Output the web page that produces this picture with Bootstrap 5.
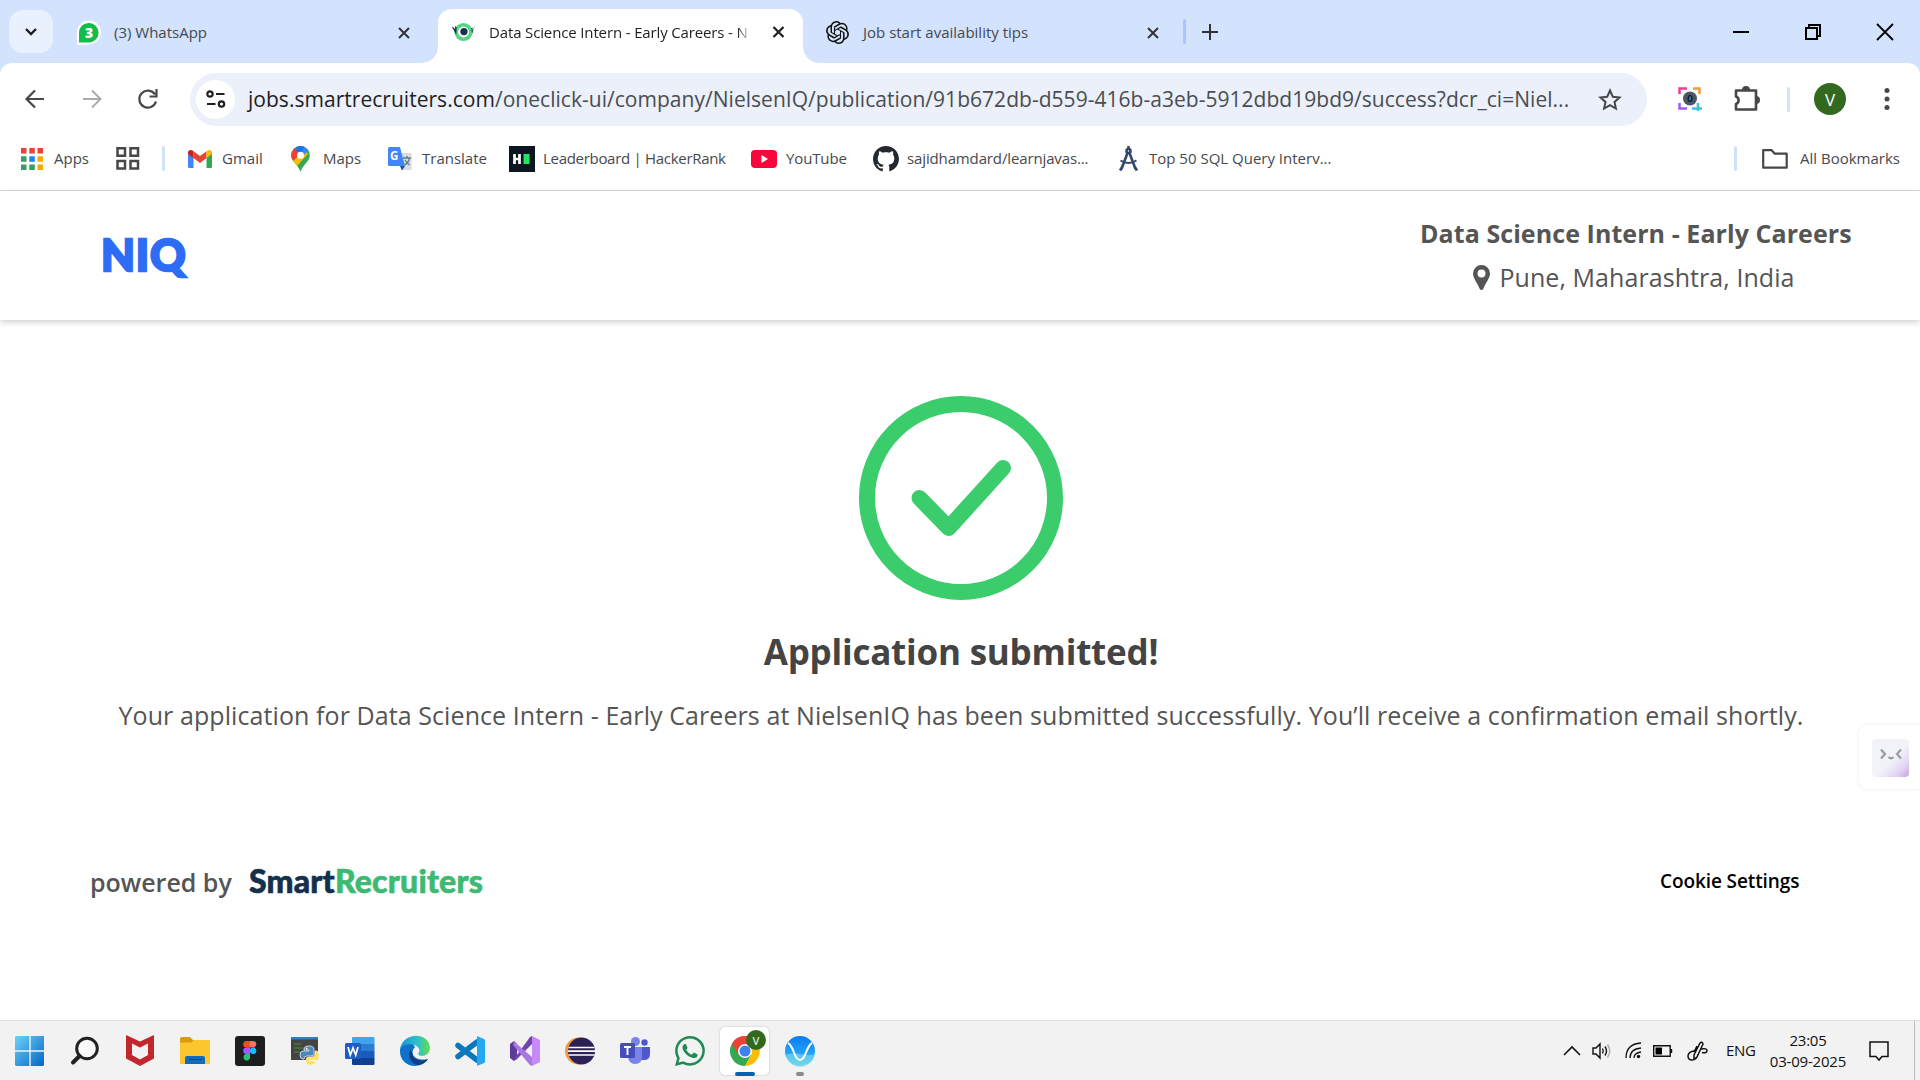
<!DOCTYPE html>
<html lang="en">
<head>
<meta charset="utf-8">
<title>Data Science Intern - Early Careers</title>
<link href="https://cdn.jsdelivr.net/npm/bootstrap@5.3.0/dist/css/bootstrap.min.css" rel="stylesheet">
<style>
body{font-family:"Open Sans","Noto Sans",sans-serif;width:1920px;height:1080px;overflow:hidden;background:#fff;line-height:1}
svg{display:block;flex:none;overflow:visible}
span,h1,p{white-space:nowrap}
.tabstrip{height:63px;background:#d3e3fd;display:grid;grid-template-columns:9px 44px 20px 365px 365px 380px 26px 1fr 213px;font-size:15px;color:#46494d}
.tabsearch{height:43px;margin-top:10px;border-radius:14px;background:#eaf1fe}
.tabitem{display:grid;padding-top:2px}
.tab-first{grid-template-columns:3px 38px 1fr 40px}
.tab-third{grid-template-columns:23px 37px 284px 1fr}
.tab-active{grid-template-columns:13px 38px 264px 19px 1fr;background:#fff;margin-top:9px;border-radius:14px 14px 0 0;padding:0 0 9px;height:54px;color:#1f1f1f;position:relative}
.tab-active .ttl{overflow:hidden;line-height:28px;letter-spacing:-.14px;-webkit-mask-image:linear-gradient(90deg,#000 94%,transparent 99.5%)}
.tab-active::before,.tab-active::after{content:"";position:absolute;bottom:0;width:16px;height:16px}
.tab-active::before{left:-16px;background:radial-gradient(circle at 0 0,transparent 15.5px,#fff 16px)}
.tab-active::after{right:-16px;background:radial-gradient(circle at 100% 0,transparent 15.5px,#fff 16px)}
.cornerwrap{background:#d3e3fd}
.winbtns{gap:56px;margin-left:26px}
.toolbarrow{height:71px;padding-top:1px;background:#fff;border-radius:12px 12px 0 0;display:grid;grid-template-columns:25px 57px 56px 52px 1457px 31px 56px 53px 27px 65px 1fr}
.toolbarrow>*{align-self:center}
.omni{height:53px;border-radius:27px;background:#ebf0fa;display:grid;grid-template-columns:6px 39px 13px 1350px 1fr;align-items:center;font-size:21px;letter-spacing:.03px;color:#4a4d51}
.omni b{font-weight:400;color:#1f1f1f}
.tunebtn{width:39px;height:39px;border-radius:50%;background:#fff}
.vsep{width:3px;border-radius:2px;height:25px;background:#d0e1fc}
.avatar{width:32px;height:32px;border-radius:50%;background:#33691e;color:#fff;font-size:17px}
.bookmarks{height:57px;border-bottom:1px solid #dcdcdc;display:grid;align-items:center;padding-bottom:7px;color:#46494d;font-size:15px;grid-template-columns:21px 33px 62px 46px 26px 34px 69px 32px 65px 34px 87px 34px 208px 35px 87px 34px 212px 30px 585px 28px 38px 1fr}
.tight{letter-spacing:-.3px}
.snug{letter-spacing:-.13px}
.jobhead{height:129px;box-shadow:0 2px 6px rgba(0,0,0,.2);position:relative;background:#fff;display:grid;grid-template-columns:101px 1fr 500px}
.brand{font:900 44px/1 Lato,sans-serif;color:#2d6df6;padding-top:41px;-webkit-text-stroke:2.4px #2d6df6;letter-spacing:.8px}
.jobinfo{color:#555;font-size:25px;line-height:44px;padding-top:20px;text-align:center;width:431px;letter-spacing:.07px}
.jobinfo .place{gap:9px;padding-right:3px}
.confirm{height:550px;padding:76px 0 0 2px;color:#555}
.confirm h1{font-size:35px;font-weight:700;color:#444;margin:32px 0 0;line-height:40px;letter-spacing:-.22px}
.confirm p{font-size:25px;margin:25px 0 0;line-height:36px;letter-spacing:.083px}
.foot{height:150px;display:grid;grid-template-columns:90px 159px 1411px 1fr;align-items:start}
.powered{font-size:25px;font-weight:600;color:#555}
.sr{font:900 32px/1 Lato,sans-serif;color:#14304a;margin-top:-5px;letter-spacing:.2px;-webkit-text-stroke:.6px}
.sr i{font-style:normal;color:#3dba72}
.cookie{font-size:19px;font-weight:600;color:#000;margin-top:2px;letter-spacing:-.1px}
.widget{position:absolute;left:1859px;top:725px;width:61px;height:64px;border-radius:8px 0 0 8px;background:#fff;box-shadow:0 0 4px rgba(0,0,0,.07);padding:14px 13px}
.taskbar{position:absolute;left:0;top:1020px;width:1920px;height:60px;background:#f2f2f2;border-top:1px solid #e0e0e0;padding-bottom:2px;display:grid;grid-template-columns:2px repeat(15,55px) 737px 28px 33px 28px 34px 39px 43px 78px 22px 45px 1fr;align-items:center;font-size:15px;color:#111}
.apps-ic{width:55px;height:57px;display:flex;align-items:center;justify-content:center;position:relative}
.live{position:absolute;left:3px;top:5px;width:49px;height:48px;background:#fff;border-radius:5px;box-shadow:0 0 2px rgba(0,0,0,.25)}
.ind{position:absolute;bottom:3px;height:4px;border-radius:2px}
.ind-on{width:20px;background:#0560b3}
.ind-off{width:8px;background:#8a8a8a}
.tagv{position:absolute;left:29px;top:8px;width:20px;height:20px;border-radius:50%;background:#33691e;color:#d8e6cf;font-size:11px;font-weight:600}
.clock{line-height:21px;letter-spacing:-.2px}
.edge-line{width:1px;height:59px;background:#bbb}
</style>
</head>
<body>
<div class="tabstrip">
 <div></div>
 <div class="tabsearch d-flex align-items-center justify-content-center"><svg width="12" height="8" viewBox="0 0 12 8" fill="none" stroke="#1f1f1f" stroke-width="2.4"><path d="M1 1l5 5 5-5"/></svg></div>
 <div></div>
 <div class="tabitem tab-first align-items-center">
  <i></i><svg width="25" height="25" viewBox="0 0 25 25"><path d="M1 25V12A12 12 0 1 1 13 24.500z" fill="#fff"/><path d="M3 22.500V12.500A9.800 9.800 0 1 1 12.500 22.500z" fill="#12bd4b"/><text x="13" y="17.500" font-size="14" font-weight="800" fill="#fff" text-anchor="middle">3</text></svg>
  <span>(3) WhatsApp</span>
  <svg width="12" height="12" viewBox="0 0 12 12" stroke="#333" stroke-width="2"><path d="M1 1l10 10M11 1L1 11"/></svg>
 </div>
 <div class="tabitem tab-active align-items-center">
  <i></i><svg width="25" height="20" viewBox="0 0 26 22"><circle cx="13" cy="11" r="10" fill="#52d681"/><circle cx="13" cy="11" r="6" fill="#fff"/><circle cx="13.500" cy="10.500" r="4" fill="#17324d"/><path d="M0 5l2 1 2 2-.5-4 2 2-.5 8zM26 2l-3.500 11-1-6 1.500-1v4z" fill="#17324d"/></svg>
  <span class="ttl">Data Science Intern - Early Careers - N</span><i></i>
  <svg width="13" height="12" viewBox="0 0 12 12" stroke="#1f1f1f" stroke-width="2.200"><path d="M1 1l10 10M11 1L1 11"/></svg>
 </div>
 <div class="tabitem tab-third align-items-center">
  <i></i><svg width="23" height="23" viewBox="0 0 24 24"><path fill="#111" d="M22.282 9.821a5.985 5.985 0 0 0-.516-4.910 6.046 6.046 0 0 0-6.510-2.900A6.065 6.065 0 0 0 4.981 4.182a5.985 5.985 0 0 0-3.998 2.900 6.046 6.046 0 0 0 .743 7.097 5.980 5.980 0 0 0 .510 4.911 6.051 6.051 0 0 0 6.515 2.900A5.985 5.985 0 0 0 13.260 24a6.056 6.056 0 0 0 5.772-4.206 5.990 5.990 0 0 0 3.998-2.900 6.056 6.056 0 0 0-.748-7.073zM13.260 22.430a4.476 4.476 0 0 1-2.876-1.041l.141-.081 4.779-2.758a.795.795 0 0 0 .393-.681v-6.737l2.020 1.169a.071.071 0 0 1 .038.052v5.583a4.504 4.504 0 0 1-4.495 4.494zM3.600 18.304a4.471 4.471 0 0 1-.535-3.014l.142.085 4.783 2.759a.771.771 0 0 0 .781 0l5.843-3.369v2.332a.080.080 0 0 1-.033.062L9.740 19.950a4.500 4.500 0 0 1-6.140-1.646zM2.341 7.896a4.485 4.485 0 0 1 2.366-1.973V11.600a.766.766 0 0 0 .388.677l5.815 3.354-2.020 1.169a.076.076 0 0 1-.071 0l-4.830-2.787A4.504 4.504 0 0 1 2.341 7.872zm16.597 3.855-5.833-3.387L15.119 7.200a.076.076 0 0 1 .071 0l4.830 2.791a4.494 4.494 0 0 1-.676 8.105v-5.678a.790.790 0 0 0-.407-.667zm2.010-3.023-.141-.085-4.774-2.782a.776.776 0 0 0-.785 0L9.409 9.230V6.897a.066.066 0 0 1 .028-.061l4.830-2.787a4.500 4.500 0 0 1 6.680 4.660zM8.307 12.863l-2.020-1.164a.080.080 0 0 1-.038-.057V6.075a4.500 4.500 0 0 1 7.375-3.453l-.142.080L8.704 5.460a.795.795 0 0 0-.393.681zm1.097-2.366 2.602-1.500 2.607 1.500v3l-2.597 1.500-2.607-1.500z"/></svg>
  <span>Job start availability tips</span>
  <svg width="12" height="12" viewBox="0 0 12 12" stroke="#333" stroke-width="2"><path d="M1 1l10 10M11 1L1 11"/></svg>
 </div>
 <div class="d-flex align-items-center"><div class="vsep" style="background:#a8c7fa"></div></div>
 <svg class="align-self-center ms-n2" style="margin-left:-7px" width="16" height="16" viewBox="0 0 16 16" stroke="#333" stroke-width="2"><path d="M8 0v16M0 8h16"/></svg>
 <div class="winbtns d-flex align-items-center"><svg width="16" height="16" stroke="#000" stroke-width="2"><path d="M0 8h16"/></svg><svg width="16" height="16" fill="none" stroke="#000" stroke-width="2"><path d="M1 4h11v11H1zM4 4V1h11v11h-3"/></svg><svg width="16" height="16" stroke="#000" stroke-width="1.800"><path d="M0 0l16 16M16 0L0 16"/></svg></div>
</div>
<div class="cornerwrap"><div class="toolbarrow">
 <i></i>
 <svg width="20" height="20" viewBox="0 0 20 20" fill="none" stroke="#474747" stroke-width="2.200"><path d="M19 10H2M10 1.500L1.500 10l8.500 8.500"/></svg>
 <svg width="20" height="20" viewBox="0 0 20 20" fill="none" stroke="#ababab" stroke-width="2"><path d="M1 10h17M10 1.500l8.500 8.500-8.500 8.500"/></svg>
 <svg width="20" height="20" viewBox="0 0 20 20" fill="none" stroke="#474747" stroke-width="2.200"><path d="M18 12.500A8.500 8.500 0 1 1 17 5.500M18.500 0v7.500H11.500"/></svg>
 <div class="omni"><i></i><div class="tunebtn d-flex align-items-center justify-content-center"><svg width="20" height="18" viewBox="0 0 20 18" fill="none" stroke="#1f1f1f" stroke-width="2.200"><circle cx="4" cy="4" r="2.700"/><path d="M10 4h8.500M1 14h8.500"/><circle cx="15.500" cy="14" r="2.700"/></svg></div><i></i><span><b>jobs.smartrecruiters.com</b>/oneclick-ui/company/NielsenIQ/publication/91b672db-d559-416b-a3eb-5912dbd19bd9/success?dcr_ci=Niel...</span>
 <svg width="24" height="23" viewBox="0 0 24 23" fill="none" stroke="#474747" stroke-width="2"><path d="M12 2.500l2.800 6.200 6.700.700-5 4.500 1.400 6.600-5.900-3.400-5.900 3.400 1.400-6.600-5-4.500 6.700-.700z"/></svg></div>
 <i></i>
 <svg width="25" height="24" viewBox="0 0 25 24" fill="none" stroke-width="2.500"><path d="M1.500 7V1.500H9" stroke="#ea3f8f"/><path d="M15 1.500h6.500V7" stroke="#f29a3c"/><path d="M1.500 16v5.500H9" stroke="#9b5cf0"/><path d="M14 21.500h10M20 16v8" stroke="#3cc3dd"/><circle cx="12" cy="11.500" r="7" fill="#4b5563"/><ellipse cx="12" cy="11.500" rx="2.500" ry="3.500" fill="#111c2c"/><path d="M12 9.500v4" stroke="#4cb3ee" stroke-width="1.200"/></svg>
 <svg width="26" height="26" viewBox="0 0 26 26" fill="none" stroke="#474747" stroke-width="2.600"><path d="M2 4.500h20v19H2v-5.500a4 4 0 0 0 0-7.500z" stroke-linejoin="round"/><path d="M8 4a4 4 0 0 1 8 0zM22 10a4 4 0 0 1 0 8z" fill="#474747" stroke="none"/></svg>
 <div class="vsep"></div>
 <div class="avatar d-flex align-items-center justify-content-center">V</div>
 <svg width="18" height="22" fill="#474747"><circle cx="8" cy="2.500" r="2.500"/><circle cx="8" cy="11" r="2.500"/><circle cx="8" cy="19.500" r="2.500"/></svg>
</div></div>
<div class="bookmarks">
 <i></i><svg width="22" height="22" viewBox="0 0 22 22"><path fill="#ea4335" d="M0 0h5.500v5.500H0zM8.300 0h5.500v5.500H8.300zM16.500 0H22v5.500h-5.500z"/><path fill="#34a062" d="M0 8.300h5.500v5.500H0zM0 16.500h5.500V22H0zM8.300 16.500h5.500V22H8.300z"/><path fill="#1a83f0" d="M8.300 8.300h5.500v5.500H8.300z"/><path fill="#fbaa05" d="M16.500 8.300H22v5.500h-5.500zM16.500 16.500H22V22h-5.500z"/></svg>
 <span>Apps</span>
 <svg width="24" height="23" viewBox="0 0 24 23" fill="none" stroke="#474747" stroke-width="2.500"><path d="M1.500 1.300h7.500v7.500H1.500zM14.500 1.300h7.500v7.500h-7.500zM1.500 14h7.500v7.500H1.500zM14.500 14h7.500v7.500h-7.500z"/></svg>
 <div class="vsep"></div>
 <svg width="24" height="18" viewBox="0 0 24 18"><path fill="#4285f4" d="M0 2.500V16.500Q0 18 1.500 18H5.500V7z"/><path fill="#34a853" d="M24 2.500V16.500Q24 18 22.500 18H18.500V7z"/><path fill="#ea4335" d="M5.500 1.200V8L12 13l6.500-5V1.200L12 6z"/><path fill="#c5221f" d="M0 2.500C0 0 2.800-.900 5.500 1.200V8L0 4z"/><path fill="#fbbc04" d="M24 2.500c0-2.500-2.800-3.400-5.500-1.300V8L24 4z"/></svg>
 <span>Gmail</span>
 <svg width="19" height="26" viewBox="0 0 19 26"><defs><clipPath id="pin"><path d="M9.500 0A9.300 9.300 0 0 0 .200 9.300C.200 16 7 18 9.500 26 12 18 18.800 16 18.800 9.300A9.300 9.300 0 0 0 9.500 0z"/></clipPath></defs><g clip-path="url(#pin)"><path fill="#34a853" d="M0 0h19v26H0z"/><path fill="#fbbc04" d="M0 17L14 3l3 5L5 21H0z"/><path fill="#4285f4" d="M5 0h14v4L9 12z"/><path fill="#1a73e8" d="M7 0L2 3l7 6 5-9z"/><path fill="#ea4335" d="M0 3l3-1 6 6-7 7H0z"/></g><circle cx="9.500" cy="9.300" r="3.500" fill="#fff"/></svg>
 <span>Maps</span>
 <svg width="25" height="24" viewBox="0 0 25 24"><path fill="#dadce0" d="M11 6h12.500v17H14z"/><path fill="#4285f4" d="M1.500 0H12l5 19H1.500Q0 19 0 17.500v-16Q0 0 1.500 0z"/><path fill="#174ea6" d="M12 19h5l-3 4.500z"/><text x="2" y="13" font-size="11.500" font-weight="700" fill="#fff">G</text><path d="M15 11h8M19 9v2M21.500 11q-1 5-5 7M17 13q1.500 3 4.500 5" stroke="#5f7d86" fill="none" stroke-width="1.300"/></svg>
 <span>Translate</span>
 <svg width="26" height="26" viewBox="0 0 26 26"><path fill="#0b1620" d="M0 0h26v26H0z"/><path d="M5.500 8v10M10.500 8v10M5.500 13h5" stroke="#fff" stroke-width="2.700"/><path fill="#1fe565" d="M14.500 8h6v10h-6z"/></svg>
 <span class="tight">Leaderboard | HackerRank</span>
 <svg width="26" height="18" viewBox="0 0 26 18"><rect width="26" height="18" rx="4" fill="#f9063a"/><path d="M10.500 5v8l6.500-4z" fill="#fff"/></svg>
 <span class="snug">YouTube</span>
 <svg width="26" height="26" viewBox="0 0 16 16"><path fill="#24292f" d="M8 0C3.580 0 0 3.580 0 8c0 3.540 2.290 6.530 5.470 7.590.400.070.550-.170.550-.380 0-.190-.010-.820-.010-1.490-2.010.370-2.530-.490-2.690-.940-.090-.230-.480-.940-.820-1.130-.280-.150-.680-.520-.010-.530.630-.010 1.080.580 1.230.820.720 1.210 1.870.870 2.330.660.070-.520.280-.870.510-1.070-1.780-.200-3.640-.890-3.640-3.950 0-.870.310-1.590.820-2.150-.080-.200-.360-1.020.080-2.120 0 0 .670-.210 2.200.820.640-.180 1.320-.270 2-.270s1.360.090 2 .270c1.530-1.040 2.200-.820 2.200-.820.440 1.100.160 1.920.080 2.120.510.560.820 1.270.820 2.150 0 3.070-1.870 3.750-3.650 3.950.290.250.540.730.540 1.480 0 1.070-.010 1.930-.010 2.200 0 .210.150.460.550.380A8.010 8.010 0 0 0 16 8c0-4.420-3.580-8-8-8"/></svg>
 <span class="snug">sajidhamdard/learnjavas...</span>
 <svg width="19" height="25" viewBox="0 0 19 25" fill="none" stroke="#34476e" stroke-width="2.600"><circle cx="9.500" cy="5" r="2"/><path d="M9.500 0v3M8.500 7L2.500 23M10.500 7l6 16M1 24.500l2.500-4M18 24.500l-2.500-4"/><path d="M1.500 14.500q8 5 16 0" stroke-width="2"/></svg>
 <span>Top 50 SQL Query Interv...</span>
 <div class="vsep"></div>
 <svg width="26" height="20" viewBox="0 0 26 20" fill="none" stroke="#474747" stroke-width="2.200" stroke-linejoin="round"><path d="M1.200 1.200h8.500l3 3.500h12v14H1.200z"/></svg>
 <span>All Bookmarks</span>
</div>
<header class="jobhead">
 <i></i><div class="brand">NIQ</div>
 <div class="jobinfo"><div class="fw-bold"><span>Data Science Intern - Early Careers</span></div>
 <div class="place d-flex align-items-center justify-content-center"><svg width="17" height="25" viewBox="0 0 17 25"><path fill="#555" fill-rule="evenodd" d="M8.500 0A8.500 8.500 0 0 0 0 8.500C0 13 4.500 18 6.500 23.500Q8.500 26.500 10.500 23.500C12.500 18 17 13 17 8.500A8.500 8.500 0 0 0 8.500 0zm0 4.500a4 4 0 1 1 0 8 4 4 0 0 1 0-8z"/></svg><span>Pune, Maharashtra, India</span></div></div>
</header>
<main class="confirm d-flex flex-column align-items-center">
 <svg width="204" height="204" viewBox="0 0 204 204" fill="none" stroke="#3bcc6c" stroke-width="16" stroke-linecap="round" stroke-linejoin="round"><circle cx="102" cy="102" r="94"/><path d="M60.500 102l29.200 30L144 72"/></svg>
 <h1>Application submitted!</h1>
 <p>Your application for Data Science Intern - Early Careers at NielsenIQ has been submitted successfully. You’ll receive a confirmation email shortly.</p>
</main>
<footer class="foot"><i></i><div class="powered"><span>powered by</span></div><div class="sr"><span>Smart<i>Recruiters</i></span></div><div class="cookie"><span>Cookie Settings</span></div></footer>
<div class="widget"><svg width="37" height="38" viewBox="0 0 37 38"><defs><linearGradient id="wg" x1="0" y1="0" x2="1" y2="1"><stop offset=".55" stop-color="#f1f3f8"/><stop offset=".8" stop-color="#e3d3f3"/><stop offset="1" stop-color="#c9a4e6"/></linearGradient></defs><rect width="37" height="38" rx="4" fill="url(#wg)"/><path d="M9 10.500l4 4.500-4 4.500M29 10.500l-4 4.500 4 4.500M16.500 18q2.500 2.500 5 0" fill="none" stroke="#9a9ca3" stroke-width="2.200"/></svg></div>
<div class="taskbar"><i></i>
 <div class="apps-ic"><svg width="30" height="30" viewBox="0 0 30 30"><defs><linearGradient id="w" x1="0" y1="0" x2="1" y2="1"><stop stop-color="#6fd0fb"/><stop offset="1" stop-color="#0067c5"/></linearGradient></defs><path fill="url(#w)" d="M1 0h13.300v14.300H0V1zM15.700 0H29v14.300H15.700zM0 15.700h14.300V30H1l-1-1zM15.700 15.700H29V29l-1 1H15.700z"/></svg></div>
 <div class="apps-ic"><svg width="28" height="29" viewBox="0 0 28 29" fill="none" stroke="#222" stroke-width="3"><circle cx="16" cy="12.500" r="10.300" fill="#fafafa"/><path d="M8.500 20L2 26.500" stroke-width="4" stroke-linecap="round"/></svg></div>
 <div class="apps-ic"><svg width="28" height="31" viewBox="0 0 28 31"><path fill="#c1272d" fill-rule="evenodd" d="M0 0l14 6.500L28 0v23.500L14 31 0 23.500zm6 8.500V20l8 4.500 8-4.500V8.500l-8 4z"/></svg></div>
 <div class="apps-ic"><svg width="30" height="28" viewBox="0 0 30 28"><path fill="#d99a14" d="M0 6V2q0-2 2-2h8l3 3h17v3z"/><path fill="#fcc72e" d="M0 5.500h11L14 3h16v24H0z"/><path fill="#0f6cbd" d="M5 27v-6q0-2 2-2h16q2 0 2 2v6z"/><path d="M9 22.500h13" stroke="#0a4680"/></svg></div>
 <div class="apps-ic"><svg width="30" height="30" viewBox="0 0 30 30"><rect width="30" height="30" rx="3" fill="#1e1e1e"/><path fill="#f24e1e" d="M15 5h-3.500a3.200 3.200 0 0 0 0 6.500H15z"/><path fill="#ff7262" d="M15 5h3a3.200 3.200 0 0 1 0 6.500h-3z"/><path fill="#a259ff" d="M15 11.500h-3.500a3.200 3.200 0 0 0 0 6.500H15z"/><circle cx="18.200" cy="14.800" r="3.200" fill="#1abcfe"/><path fill="#2bc46e" d="M15 18h-3.500a3.200 3.200 0 1 0 3.500 3.200z"/></svg></div>
 <div class="apps-ic"><svg width="28" height="28" viewBox="0 0 28 28"><path fill="#444" d="M0 1h27v22H0z"/><path fill="#2f7fc0" d="M0 0h27v2.500H0z"/><path d="M3 7h7M3 11h9M3 15h6" stroke="#4c8f3a"/><path fill="#4a86b8" stroke="#e8eef5" stroke-width=".8" d="M13 12q0-3 5-3t5 3v5q0 2-3 2h-4q-3 0-3 3h-1q-3 0-3-4t3-4h6v-1h-5z"/><circle cx="15.700" cy="11.500" r=".9" fill="#fff"/><path fill="#ffdf5e" stroke="#fff8dc" stroke-width=".6" d="M24 14h1q3 0 3 4.500t-3 4.500h-6v1h5v1.500q0 2.500-4 2.500-5 0-5-3v-2q0-3 3-3h3q3 0 3-3z"/></svg></div>
 <div class="apps-ic"><svg width="30" height="28" viewBox="0 0 30 28"><path fill="#41a5ee" d="M7 1q0-1 1-1h20q1.500 0 1.500 1v6H7z"/><path fill="#2b7cd3" d="M7 7h22.500v7H7z"/><path fill="#185abd" d="M7 14h22.500v7H7z"/><path fill="#103f91" d="M7 21h22.500v6q0 1-1 1H8q-1 0-1-1z"/><rect y="6" width="16" height="16" rx="1.500" fill="#1d5cc0"/><path d="M3 10l2.300 8L8 11l2.700 7L13 10" fill="none" stroke="#fff" stroke-width="1.800"/></svg></div>
 <div class="apps-ic"><svg width="30" height="30" viewBox="0 0 30 30"><defs><linearGradient id="e"><stop stop-color="#1595dc"/><stop offset=".6" stop-color="#2fc2c8"/><stop offset="1" stop-color="#67dc48"/></linearGradient></defs><path fill="#0d72c8" d="M0 14C1 8 6 6 12 7l3 4c-6 6-1 15 13 12C20 35-1 31 0 14z"/><path fill="#123f83" d="M10 14c-3 8 3 15 8 15 5-.500 8-3 10-6-9 4-15 0-16-7z"/><path fill="url(#e)" d="M0 14C2-4 29-5 30 12c0 8-10 10-12 6 3-3 1-8-4-9C8 7 2 9 0 14z"/></svg></div>
 <div class="apps-ic"><svg width="30" height="30" viewBox="0 0 30 30"><path d="M3 9.500L22 24M3 20.500L22 6" stroke="#0a78bd" stroke-width="5.500" stroke-linecap="round"/><path fill="#23a9f2" d="M22 0l7 3q1 .5 1 1.500v21q0 1-1 1.500l-7 3z"/></svg></div>
 <div class="apps-ic"><svg width="30" height="30" viewBox="0 0 30 30"><path fill="#5d3a97" d="M0 8l4-3 3 3v14l-3 3-4-3z"/><path fill="#6f45ad" d="M3 24.500L20 1l2-1v8L6 24z"/><path fill="#a678e0" d="M4 5.500L22 21v9l-2-1L3 9z"/><path fill="#c58af5" d="M22 0l8 4v22l-8 4z"/></svg></div>
 <div class="apps-ic"><svg width="30" height="28" viewBox="0 0 30 28"><circle cx="13.500" cy="14" r="13.500" fill="#f5993a"/><circle cx="16.500" cy="14" r="13.500" fill="#2c2255"/><path d="M3.500 10.500h26M3 14.200h27M3.500 18h26" stroke="#fff" stroke-width="1.700"/></svg></div>
 <div class="apps-ic"><svg width="30" height="27" viewBox="0 0 30 27"><circle cx="15.500" cy="4.500" r="4.500" fill="#7b83eb"/><circle cx="24.500" cy="5.500" r="3.200" fill="#5059c9"/><path fill="#5059c9" d="M20 10h10v7q0 6-6 6h-4z"/><path fill="#7b83eb" d="M9 10h13v10q0 7-7 7-6 0-7-7z"/><rect y="6" width="15" height="15" rx="1.500" fill="#464eb8"/><path d="M4 10h7M7.500 10v8" stroke="#fff" stroke-width="1.900"/></svg></div>
 <div class="apps-ic"><svg width="30" height="30" viewBox="0 0 16 16"><path fill="#1f8a56" d="M13.601 2.326A7.850 7.850 0 0 0 7.994 0C3.627 0 .068 3.558.064 7.926c0 1.399.366 2.760 1.057 3.965L0 16l4.204-1.102a7.900 7.900 0 0 0 3.790.965h.004c4.368 0 7.926-3.558 7.930-7.930A7.900 7.900 0 0 0 13.600 2.326zM7.994 14.521a6.600 6.600 0 0 1-3.356-.920l-.240-.144-2.494.654.666-2.433-.156-.251a6.560 6.560 0 0 1-1.007-3.505c0-3.626 2.957-6.584 6.591-6.584a6.560 6.560 0 0 1 4.660 1.931 6.560 6.560 0 0 1 1.928 4.660c-.004 3.639-2.961 6.592-6.592 6.592m3.615-4.934c-.197-.099-1.170-.578-1.353-.646-.182-.065-.315-.099-.445.099-.133.197-.513.646-.627.775-.114.133-.232.148-.430.050-.197-.100-.836-.308-1.592-.985-.590-.525-.985-1.175-1.103-1.372-.114-.198-.011-.304.088-.403.087-.088.197-.232.296-.346.100-.114.133-.198.198-.330.065-.134.034-.248-.015-.347-.050-.099-.445-1.076-.612-1.470-.160-.389-.323-.335-.445-.340-.114-.007-.247-.007-.380-.007a.73.73 0 0 0-.529.247c-.182.198-.691.677-.691 1.654s.710 1.916.810 2.049c.098.133 1.394 2.132 3.383 2.992.470.205.840.326 1.129.418.475.152.904.129 1.246.080.380-.058 1.171-.480 1.338-.943.164-.464.164-.860.114-.943-.049-.084-.182-.133-.380-.232"/></svg></div>
 <div class="apps-ic"><div class="live"></div><svg class="position-relative" width="30" height="30" viewBox="0 0 30 30"><path fill="#ea4335" d="M15 15L2 7.500A15 15 0 0 1 28 7.500z"/><path fill="#34a853" d="M2 7.500A15 15 0 0 0 15 30l6.500-11.500L15 15z"/><path fill="#ea4335" d="M2 7.500l6.500 11L15 8.200h13A15 15 0 0 0 2 7.500z"/><path fill="#fbbc04" d="M28 7.800A15 15 0 0 1 15 30l6.500-11.500L21 8.200z"/><circle cx="15" cy="15" r="7" fill="#fff"/><circle cx="15" cy="15" r="5.500" fill="#3b82f0"/></svg><span class="tagv d-flex align-items-center justify-content-center">V</span><span class="ind ind-on"></span></div>
 <div class="apps-ic"><svg width="30" height="30" viewBox="0 0 30 30"><defs><linearGradient id="u" x2="0" y2="1"><stop stop-color="#0a7af5"/><stop offset=".6" stop-color="#22a6f7"/><stop offset="1" stop-color="#5cd6dc"/></linearGradient></defs><circle cx="15" cy="15" r="15" fill="url(#u)"/><path fill="#7fd8ee" opacity=".6" d="M0 19q7-3 15-1t15 0a15 15 0 0 1-29 3z"/><path d="M3 7c6 3 6 17 12 17S21 10 27 7" fill="none" stroke="#fff" stroke-width="2"/></svg><span class="ind ind-off"></span></div>
 <i></i>
 <svg width="16" height="10" fill="none" stroke="#111" stroke-width="1.600"><path d="M0 9l8-8 8 8"/></svg>
 <svg width="20" height="18" viewBox="0 0 20 18" fill="none" stroke="#111" stroke-width="1.400"><path d="M1 6h3l4-4v14l-4-4H1zM10.500 6.500q1.500 2.500 0 5M13 4.500q3 4.500 0 9"/><path d="M15.500 2.500q4.500 6.500 0 13" stroke="#aaa"/></svg>
 <svg width="16" height="17" viewBox="0 0 16 17" fill="none" stroke="#111" stroke-width="1.300"><path d="M1 16Q1 2 16 1M5 16q0-9 11-10M9 16q0-5 7-6"/><circle cx="13.500" cy="14.500" r="1.700" fill="#111" stroke="none"/></svg>
 <svg width="20" height="12" viewBox="0 0 20 12"><path d="M.700.700h16.500v10.600H.700zM18.500 4v4" fill="none" stroke="#111" stroke-width="1.400"/><path d="M2.500 2.500H9v7H2.500z"/></svg>
 <svg width="21" height="20" viewBox="0 0 21 20" fill="none" stroke="#111" stroke-width="1.500"><path d="M7 14L13 2q2-2 3 1L10 16l-3 2zM10 5L7 11M7 10Q1 11 1 15q0 4 4 4 5 0 6-6M14 8q6-1 6 1.500 0 3-5 2"/></svg>
 <span class="tight">ENG</span>
 <div class="clock text-center"><span>23:05</span><br><span>03-09-2025</span></div>
 <i></i>
 <svg width="20" height="20" viewBox="0 0 20 20" fill="none" stroke="#111" stroke-width="1.500"><path d="M1 1h18v14.500h-6L10 19l-3-3.500H1z"/></svg>
 <div class="edge-line"></div>
</div>
<script src="https://cdn.jsdelivr.net/npm/bootstrap@5.3.0/dist/js/bootstrap.bundle.min.js"></script>
</body>
</html>
